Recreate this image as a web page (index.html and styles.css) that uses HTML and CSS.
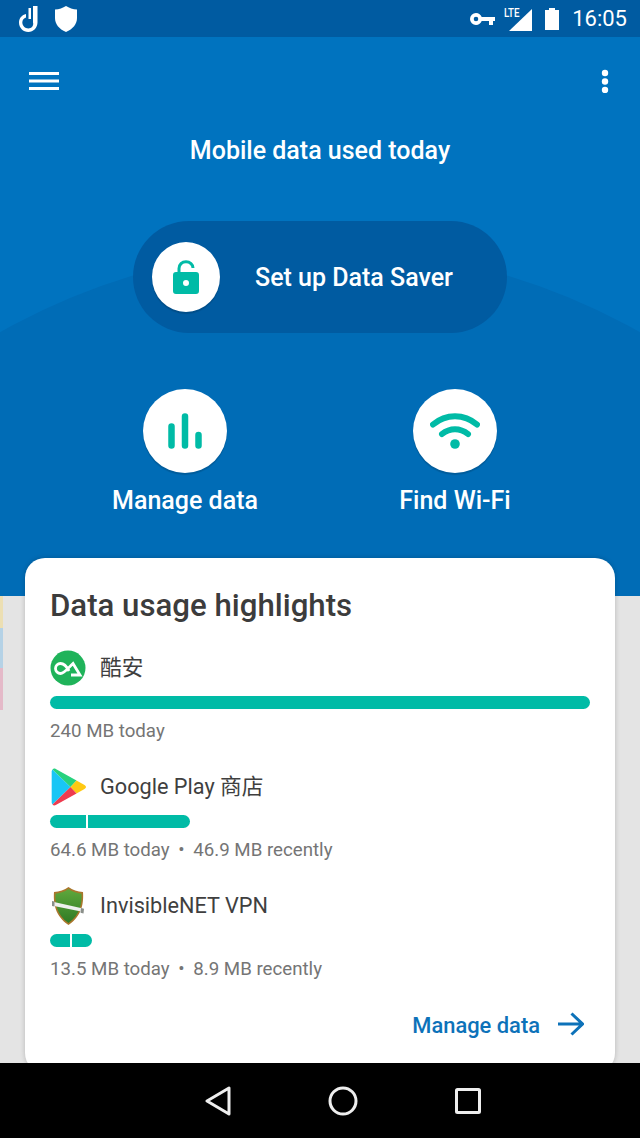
FILE: index.html
```html
<!DOCTYPE html>
<html lang="en">
<head>
  <meta charset="UTF-8">
  <meta name="viewport" content="width=device-width, initial-scale=1">
  <title>Datally</title>
  <link rel="stylesheet" href="styles.css">
</head>
<body>

  <div class="phone">
    <!-- status bar -->
    <div class="statusbar">
      <svg class="st-hand" width="20" height="26" viewBox="0 0 20 26"><path d="M9.500 2h2.500v11H9.500zM14 0h4.500v16.500c0 5-4 9.500-9.200 9.500S0 21.800 0 16.500c0-4.500 3-7.500 7-8.500v3.500c-2 .7-3.700 2.500-3.700 5 0 3 2.800 6 6 6s5.700-3 4.700-6z" fill="#fff"/></svg>
      <svg class="st-shield" width="22" height="26" viewBox="0 0 22 26"><path d="M11 0c3 2 7 3.300 11 3.500V12c0 6-4 11-11 14C4 23 0 18 0 12V3.500C4 3.300 8 2 11 0z" fill="#fff"/></svg>
      <span class="st-spacer"></span>
      <svg class="st-key" width="25" height="12" viewBox="0 0 25 12"><path fill-rule="evenodd" d="M6 0c2.700 0 5 1.700 5.700 4H25v4h-2v4h-4V8h-7.300C11 10.300 8.700 12 6 12A6 6 0 0 1 6 0zm0 3.700a2.300 2.300 0 1 0 0 4.600 2.300 2.300 0 0 0 0-4.600z" fill="#fff"/></svg>
      <span class="st-signal">
        <span class="st-lte">LTE</span>
        <svg width="23" height="22" viewBox="0 0 23 22"><path d="M23 0v22H0z" fill="#fff"/></svg>
      </span>
      <svg class="st-battery" width="14" height="22" viewBox="0 0 14 22"><path d="M4 0h6v2h4v20H0V2h4z" fill="#fff"/></svg>
      <span class="st-time">16:05</span>
    </div>

    <!-- blue header -->
    <div class="hero">
      <div class="hero-arc"></div>
      <div class="toolbar">
        <svg width="30" height="18" viewBox="0 0 30 18"><path d="M0 0h30v3H0zM0 7.500h30v3H0zM0 15h30v3H0z" fill="#fff"/></svg>
        <svg width="8" height="24" viewBox="0 0 8 24"><circle cx="4" cy="4" r="3.200" fill="#fff"/><circle cx="4" cy="12.500" r="3.200" fill="#fff"/><circle cx="4" cy="21" r="3.200" fill="#fff"/></svg>
      </div>
      <h1 class="hero-title">Mobile data used today</h1>
      <div class="saver">
        <div class="round round-sm">
          <svg width="26" height="34" viewBox="0 0 26 34"><path d="M6 13V8.500C6 4.500 9 1.800 13 1.800s7 2.700 7 6.200" fill="none" stroke="#00bba6" stroke-width="3" stroke-linecap="butt"/><path fill-rule="evenodd" d="M3 12h20a3 3 0 0 1 3 3v16a3 3 0 0 1-3 3H3a3 3 0 0 1-3-3V15a3 3 0 0 1 3-3zm10 8a3 3 0 1 0 0 6 3 3 0 0 0 0-6z" fill="#00bba6"/></svg>
        </div>
        <span class="saver-label">Set up Data Saver</span>
      </div>
      <div class="actions">
        <div class="action">
          <div class="round">
            <svg width="34" height="36" viewBox="0 0 34 36"><g fill="none" stroke="#00bba6" stroke-width="6.500" stroke-linecap="round"><path d="M3.500 13.500v19M17 3.500v29M30.500 22v10.500"/></g></svg>
          </div>
          <span class="action-label">Manage data</span>
        </div>
        <div class="action">
          <div class="round">
            <svg width="50" height="36" viewBox="0 0 50 36"><g fill="none" stroke="#00bba6" stroke-width="6" stroke-linecap="round"><path d="M3 11.500C16 .500 34 .500 47 11.500M12 21c8-6.500 18-6.500 26 0"/></g><circle cx="25" cy="31" r="4.800" fill="#00bba6"/></svg>
          </div>
          <span class="action-label">Find Wi-Fi</span>
        </div>
      </div>
    </div>

    <!-- grey area with the card on top -->
    <div class="sheet">
      <div class="strip"></div>
      <div class="card">
        <h2>Data usage highlights</h2>

        <div class="app">
          <div class="app-head">
            <svg width="36" height="36" viewBox="0 0 36 36"><circle cx="18" cy="18" r="17.500" fill="#1fb35a"/><path d="M19 21c-2-4-5-7.500-8.500-7.500a5 5 0 0 0 0 10c4 0 7.500-5.500 12.500-10L30 25H21" fill="none" stroke="#fff" stroke-width="2.800"/></svg>
            <span class="app-name">酷安</span>
          </div>
          <div class="bar bar-full"><span></span></div>
          <p class="app-sub">240 MB today</p>
        </div>

        <div class="app">
          <div class="app-head">
            <svg width="36" height="38" viewBox="-1.500 0 36 38"><path d="M1 1.500 19 19 1 36.500c-.500-.500-.800-1.200-.800-2V3.500c0-.800.300-1.500.800-2z" fill="#19c6f5"/><path d="M1 1.500c.800-1 2-1.300 3.300-.500L25 12.500 19 19z" fill="#27d27e"/><path d="M25 12.500 33 17c2 1.200 2 2.800 0 4l-8 4.500L19 19z" fill="#ffc913"/><path d="M1 36.500c.800 1 2 1.300 3.300.500L25 25.500 19 19z" fill="#ee3b4f"/></svg>
            <span class="app-name">Google Play 商店</span>
          </div>
          <div class="bar bar-play"><span class="seg-a"></span><span class="seg-b"></span></div>
          <p class="app-sub">64.6 MB today <i>•</i> 46.9 MB recently</p>
        </div>

        <div class="app">
          <div class="app-head">
            <svg width="36" height="38" viewBox="0 0 36 38"><defs><linearGradient id="vpnShield" x1="0" y1="0" x2="0" y2="1"><stop offset="0" stop-color="#5fa83c"/><stop offset="1" stop-color="#2f7a25"/></linearGradient></defs><path d="M18.500 0c4 3 9 4.500 14.500 5 .800 11-1 24-14.500 33C5 29 3.200 16 4 5c5.500-.500 10.500-2 14.500-5z" fill="#a9762c"/><path d="M18.500 2c3.500 2.500 8 4 13 4.700.500 10-1.500 21-13 29.300C7 28 5 17 5.500 6.700c5-.700 9.500-2.200 13-4.700z" fill="url(#vpnShield)"/><path d="M4 15 33 21.500l.500 3.500L4 19z" fill="#eef0ee"/><path d="M2 14l2.500.500v5L2 19zM31 21l3 .800-.500 4.700-3-.700z" fill="#8a8f8a"/></svg>
            <span class="app-name">InvisibleNET VPN</span>
          </div>
          <div class="bar bar-vpn"><span class="seg-c"></span><span class="seg-d"></span></div>
          <p class="app-sub">13.5 MB today <i>•</i> 8.9 MB recently</p>
        </div>

        <div class="card-link">
          <span>Manage data</span>
          <svg class="link-arrow" width="26" height="24" viewBox="0 0 26 24"><path d="M0 12h24M13.500 1.500 24.500 12 13.500 22.500" fill="none" stroke="#0d72b9" stroke-width="3"/></svg>
        </div>
      </div>
    </div>

    <!-- nav bar -->
    <div class="navbar">
      <svg width="26" height="30" viewBox="0 0 26 30"><path d="M24 2v26L2 15z" fill="none" stroke="#eee" stroke-width="3" stroke-linejoin="round"/></svg>
      <svg width="30" height="30" viewBox="0 0 30 30"><circle cx="15" cy="15" r="13" fill="none" stroke="#eee" stroke-width="3"/></svg>
      <svg width="26" height="26" viewBox="0 0 26 26"><rect x="1.500" y="1.500" width="23" height="23" rx="1" fill="none" stroke="#eee" stroke-width="3"/></svg>
    </div>
  </div>

</body>
</html>
```

FILE: styles.css
```css
* {
  box-sizing: border-box;
}

html, body {
  margin: 0;
  padding: 0;
}

body {
  font-family: Roboto, "Noto Sans CJK SC", sans-serif;
  background-color: #000;
}

.phone {
  width: 640px;
  height: 1138px;
  display: flex;
  flex-direction: column;
  overflow: hidden;
}

/* status bar */
.statusbar {
  height: 37px;
  flex: none;
  display: flex;
  align-items: center;
  padding: 0 13px 0 19px;
  background-color: #005ba1;
  color: #fff;
}

.st-hand {
  margin-right: 16px;
}

.st-spacer {
  flex: 1;
}

.st-key {
  margin-top: 1px;
}

.st-signal {
  display: flex;
  align-items: flex-end;
  width: 23px;
  height: 24px;
  margin-left: 14px;
  position: relative;
}

.st-lte {
  position: absolute;
  left: -5px;
  top: -2px;
  font-size: 13px;
  font-weight: 500;
  transform: scaleX(0.75);
  transform-origin: left center;
}

.st-battery {
  margin-left: 13px;
}

.st-time {
  margin-left: 13px;
  font-size: 22px;
}

/* header */
.hero {
  height: 559px;
  flex: none;
  position: relative;
  overflow: hidden;
  background-color: #0073bf;
  color: #fff;
}

.hero-arc {
  position: absolute;
  left: -330px;
  top: 211px;
  width: 1300px;
  height: 1300px;
  border-radius: 50%;
  background-color: #006cb6;
}

.toolbar {
  position: relative;
  display: flex;
  justify-content: space-between;
  align-items: center;
  height: 24px;
  margin-top: 32px;
  padding: 0 31px 0 29px;
}

.hero-title {
  position: relative;
  margin: 41px 0 0;
  height: 34px;
  line-height: 34px;
  text-align: center;
  font-size: 25px;
  font-weight: 500;
}

.saver {
  position: relative;
  width: 374px;
  height: 112px;
  margin: 53px auto 0;
  padding-left: 19px;
  display: flex;
  align-items: center;
  border-radius: 56px;
  background-color: #005ba1;
}

.saver-label {
  margin-left: 35px;
  font-size: 25px;
  font-weight: 500;
}

.round {
  width: 84px;
  height: 84px;
  flex: none;
  display: flex;
  align-items: center;
  justify-content: center;
  border-radius: 50%;
  background-color: #fff;
  box-shadow: 0 2px 1px rgba(0, 0, 0, 0.15);
}

.round-sm {
  width: 68px;
  height: 70px;
  margin-top: -1px;
}

.actions {
  position: relative;
  display: flex;
  justify-content: center;
  gap: 90px;
  margin-top: 56px;
}

.action {
  width: 180px;
  display: flex;
  flex-direction: column;
  align-items: center;
}

.action-label {
  margin-top: 14px;
  line-height: 28px;
  font-size: 25px;
  font-weight: 500;
}

/* card area */
.sheet {
  flex: 1;
  position: relative;
  background-color: #e4e4e4;
}

.strip {
  position: absolute;
  left: 0;
  top: 0;
  width: 3px;
  height: 114px;
  background: linear-gradient(#ecdfb3 0 32px, #b5d2e6 32px 72px, #e4b9c8 72px);
}

.card {
  position: absolute;
  left: 25px;
  top: -38px;
  width: 590px;
  height: 515px;
  padding: 26px 25px 0;
  border-radius: 20px;
  background-color: #fff;
  box-shadow: 0 0 5px rgba(0, 0, 0, 0.2);
}

.card h2 {
  margin: 0 0 21px;
  height: 44px;
  line-height: 44px;
  font-size: 31.200px;
  font-weight: 500;
  color: #3c3c3c;
}

.app {
  height: 119px;
}

.app-head {
  display: flex;
  align-items: center;
  height: 38px;
}

.app-name {
  margin-left: 14px;
  line-height: 26px;
  font-size: 21.700px;
  color: #3f3f3f;
}

.bar {
  display: flex;
  gap: 2px;
  height: 13px;
  margin-top: 9px;
}

.bar span {
  background-color: #00bba6;
  border-radius: 0;
}

.bar span:first-child {
  border-radius: 7px 0 0 7px;
}

.bar span:last-child {
  border-radius: 0 7px 7px 0;
}

.bar-full span {
  width: 540px;
  border-radius: 7px !important;
}

.seg-a {
  width: 36px;
}

.seg-b {
  width: 102px;
}

.seg-c {
  width: 20px;
}

.seg-d {
  width: 20px;
}

.app-sub {
  margin: 10px 0 0;
  line-height: 24px;
  font-size: 18.700px;
  color: #757575;
}

.app-sub i {
  font-style: normal;
  margin: 0 4px;
}

.card-link {
  display: flex;
  justify-content: flex-end;
  align-items: center;
  gap: 18px;
  margin-top: 7px;
  padding-right: 6px;
  font-size: 21.900px;
  font-weight: 500;
  color: #0d72b9;
}

.link-arrow {
  margin-top: -3px;
}

/* nav bar */
.navbar {
  height: 75px;
  flex: none;
  display: flex;
  align-items: center;
  justify-content: center;
  gap: 97px;
  padding-left: 46px;
  background-color: #000;
  position: relative;
}
```
